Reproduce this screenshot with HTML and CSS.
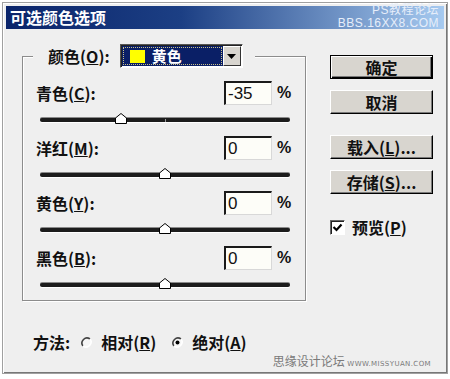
FILE: index.html
```html
<!DOCTYPE html>
<html lang="zh-CN">
<head>
    <meta charset="utf-8">
    <title>可选颜色选项</title>
    <link rel="stylesheet" href="styles.css">
</head>
<body>
<div class="window">
    <div class="titlebar">
        <span class="title">可选颜色选项</span>
    </div>
    <div class="mark-top">PS教程论坛<br>BBS.16XX8.COM</div>
    <div class="content">
        <div class="main">
            <fieldset class="group">
                <legend class="legend">
                    <span class="label">颜色(<u>O</u>):</span>
                    <span class="select">
                        <span class="select-value"><i class="swatch"></i><span>黄色</span></span>
                        <span class="select-btn">
                            <svg width="9" height="5" viewBox="0 0 9 5"><path d="M0 0H9L4.5 5Z" fill="#000"/></svg>
                        </span>
                    </span>
                </legend>
                <div class="field">
                    <span class="label">青色(<u>C</u>):</span>
                    <span class="num">-35</span>
                    <span class="pct">%</span>
                </div>
                <div class="slider">
                    <svg class="thumb" style="left:32.5%" width="12" height="11" viewBox="0 0 12 11"><path d="M0.5 10.5V5L6 0.5L11.5 5V10.5Z" fill="#fff" stroke="#000"/></svg>
                </div>
                <div class="field">
                    <span class="label">洋红(<u>M</u>):</span>
                    <span class="num">0</span>
                    <span class="pct">%</span>
                </div>
                <div class="slider">
                    <svg class="thumb" style="left:50%" width="12" height="11" viewBox="0 0 12 11"><path d="M0.5 10.5V5L6 0.5L11.5 5V10.5Z" fill="#fff" stroke="#000"/></svg>
                </div>
                <div class="field">
                    <span class="label">黄色(<u>Y</u>):</span>
                    <span class="num">0</span>
                    <span class="pct">%</span>
                </div>
                <div class="slider">
                    <svg class="thumb" style="left:50%" width="12" height="11" viewBox="0 0 12 11"><path d="M0.5 10.5V5L6 0.5L11.5 5V10.5Z" fill="#fff" stroke="#000"/></svg>
                </div>
                <div class="field">
                    <span class="label">黑色(<u>B</u>):</span>
                    <span class="num">0</span>
                    <span class="pct">%</span>
                </div>
                <div class="slider">
                    <svg class="thumb" style="left:50%" width="12" height="11" viewBox="0 0 12 11"><path d="M0.5 10.5V5L6 0.5L11.5 5V10.5Z" fill="#fff" stroke="#000"/></svg>
                </div>
            </fieldset>
            <div class="method">
                <span class="label">方法:</span>
                <span class="option">
                    <svg class="radio" width="13" height="13" viewBox="0 0 13 13"><circle cx="6.5" cy="6.5" r="5" fill="#f6f6f6"/><path d="M10 3A5 5 0 0 0 3 10" fill="none" stroke="#444" stroke-width="1.6"/><path d="M3 10A5 5 0 0 0 10 3" fill="none" stroke="#fff" stroke-width="1.6"/></svg>
                    <span>相对(<u>R</u>)</span>
                </span>
                <span class="option">
                    <svg class="radio" width="13" height="13" viewBox="0 0 13 13"><circle cx="6.5" cy="6.5" r="5" fill="#f6f6f6"/><path d="M10 3A5 5 0 0 0 3 10" fill="none" stroke="#444" stroke-width="1.6"/><path d="M3 10A5 5 0 0 0 10 3" fill="none" stroke="#fff" stroke-width="1.6"/><circle cx="6.5" cy="6.5" r="2" fill="#000"/></svg>
                    <span>绝对(<u>A</u>)</span>
                </span>
            </div>
        </div>
        <div class="side">
            <button class="btn default">确定</button>
            <button class="btn">取消</button>
            <button class="btn gap">载入(<u>L</u>)...</button>
            <button class="btn">存储(<u>S</u>)...</button>
            <label class="check">
                <span class="box">
                    <svg width="11" height="11" viewBox="0 0 11 11"><path d="M1.5 5L4.5 8L9.5 2.5" fill="none" stroke="#000" stroke-width="2.2"/></svg>
                </span>
                <span>预览(<u>P</u>)</span>
            </label>
        </div>
    </div>
    <div class="mark-bottom">思缘设计论坛 <small>WWW.MISSYUAN.COM</small></div>
</div>
</body>
</html>
```

FILE: styles.css
```css
*{
    margin:0;
    padding:0;
    box-sizing:border-box;
}
body{
    background:#fff;
    font-family:"Noto Sans CJK SC", "Liberation Sans", sans-serif;
    color:#111;
}
.window{
    position:relative;
    margin:2px 0 0 2px;
    width:446px;
    height:372px;
    padding:3px;
    background:#efefef;
    border:1px solid #a0a0a0;
    box-shadow:inset 1px 1px #fff, inset -1px -1px #777;
}
.titlebar{
    height:23px;
    padding-left:4px;
    display:flex;
    align-items:center;
    background:linear-gradient(to right, #0a246a 0%, #1c3f84 40%, #a6caf0 100%);
}
.title{
    color:#fff;
    font-size:16px;
    font-weight:700;
    line-height:23px;
}
.mark-top{
    position:absolute;
    top:1px;
    right:8px;
    font-family:"Liberation Sans", "Noto Sans CJK SC", sans-serif;
    font-size:12px;
    line-height:13px;
    text-align:right;
    color:#e6eefa;
    letter-spacing:0.5px;
}
.content{
    display:flex;
    padding:15px 0 0 16px;
}
.main{
    width:284px;
}
.label{
    font-size:16px;
    font-weight:700;
    white-space:nowrap;
}
.group{
    min-width:0;
    width:284px;
    height:257px;
    padding:13px 13px 0 13px;
    border:1px solid #8c8c8c;
    box-shadow:1px 1px #fff, inset 1px 1px #fff;
}
.legend{
    display:flex;
    align-items:center;
    gap:10px;
    margin-left:-3px;
    padding:0 12px 0 15px;
    background:#efefef;
}
.select{
    display:flex;
    width:123px;
    height:24px;
    padding:1px;
    border:1px solid;
    border-color:#555 #fff #fff #555;
    box-shadow:inset 1px 1px #222;
    background:#fff;
}
.select-value{
    flex:1;
    display:flex;
    align-items:center;
    gap:7px;
    padding-left:8px;
    background:#0a1f66;
    outline:1px dotted #c9c28a;
    outline-offset:-2px;
    color:#fff;
    font-size:15px;
    font-weight:700;
    line-height:20px;
}
.swatch{
    width:15px;
    height:13px;
    background:#ffff00;
}
.select-btn{
    width:18px;
    display:flex;
    align-items:center;
    justify-content:center;
    background:#d8d5cf;
    border:1px solid;
    border-color:#fff #333 #333 #fff;
}
.field{
    display:grid;
    grid-template-columns:1fr 48px 15px;
    column-gap:5px;
    align-items:center;
    height:24px;
}
.num{
    height:24px;
    padding-left:2px;
    background:#fdfdf8;
    border-style:solid;
    border-width:2px 1px 1px 2px;
    border-color:#1a1a1a #d8d8d8 #d8d8d8 #1a1a1a;
    font-family:"Liberation Sans", sans-serif;
    font-size:17px;
    line-height:21px;
}
.pct{
    font-family:"Liberation Sans", sans-serif;
    font-size:16px;
    font-weight:700;
}
.slider{
    position:relative;
    height:16px;
    margin:7px 2px 8px 4px;
}
.slider::before{
    content:"";
    position:absolute;
    left:0;
    right:0;
    top:6px;
    height:4px;
    border-radius:2px;
    background:#1c1c1c;
    box-shadow:0 -1px #8a8a8a, 0 1px #fff;
}
.slider::after{
    content:"";
    position:absolute;
    left:50%;
    top:7px;
    width:1px;
    height:3px;
    background:#999;
}
.thumb{
    position:absolute;
    top:1px;
    margin-left:-6px;
    z-index:1;
}
.method{
    display:flex;
    align-items:center;
    height:20px;
    margin:31px 0 0 11px;
}
.option{
    display:flex;
    align-items:center;
    gap:8px;
    margin-left:10px;
    font-size:16px;
    font-weight:700;
}
.option + .option{
    margin-left:15px;
}
.side{
    display:flex;
    flex-direction:column;
    align-items:flex-start;
    margin-left:24px;
    padding-top:11px;
}
.btn{
    width:103px;
    height:24px;
    margin-bottom:11px;
    background:#d8d5cf;
    border:1px solid;
    border-color:#fff #000 #000 #fff;
    box-shadow:inset -1px -1px #7a7a7a;
    font-family:"Noto Sans CJK SC", "Liberation Sans", sans-serif;
    font-size:16px;
    font-weight:700;
    color:#111;
    line-height:20px;
}
.btn.default{
    border:1px solid #000;
    box-shadow:inset 1px 1px #fff, inset -1px -1px #000, inset -2px -2px #7a7a7a;
}
.btn.gap{
    margin-top:10px;
}
.check{
    display:flex;
    align-items:center;
    gap:7px;
    margin-top:10px;
    font-size:16px;
    font-weight:700;
}
.box{
    width:15px;
    height:15px;
    display:flex;
    align-items:center;
    justify-content:center;
    background:#fff;
    border:1px solid;
    border-color:#666 #fff #fff #666;
    box-shadow:inset 1px 1px #222;
}
.mark-bottom{
    position:absolute;
    right:16px;
    bottom:4px;
    font-size:12px;
    color:#7a7a7a;
}
.mark-bottom small{
    font-family:"DejaVu Sans", sans-serif;
    font-size:7px;
    letter-spacing:0.4px;
}
```
